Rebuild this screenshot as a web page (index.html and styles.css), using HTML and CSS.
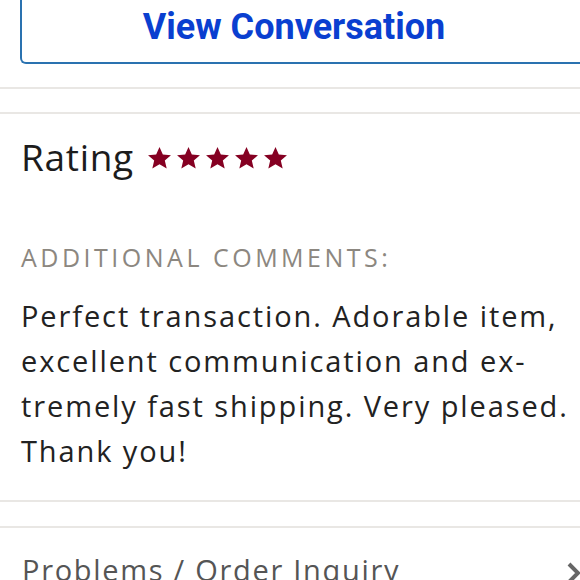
FILE: index.html
```html
<!DOCTYPE html>
<html>
<head>
<meta charset="utf-8">
<link rel="stylesheet" href="styles.css">
</head>
<body>
<div class="page">
  <div class="btn-row">
    <div class="btn">View Conversation</div>
  </div>
  <div class="sep sep-a"></div>
  <div class="sep sep-b"></div>
  <section class="review">
    <div class="rating">
      <span class="rating-label">Rating</span>
      <span class="stars">
        <svg class="star" viewBox="0 0 24 24"><path d="M12 1l3.2 7.1 7.8.7-5.9 5.2 1.8 7.7L12 17.6l-6.9 4.1 1.8-7.7L1 8.8l7.8-.7z"/></svg>
        <svg class="star" viewBox="0 0 24 24"><path d="M12 1l3.2 7.1 7.8.7-5.9 5.2 1.8 7.7L12 17.6l-6.9 4.1 1.8-7.7L1 8.8l7.8-.7z"/></svg>
        <svg class="star" viewBox="0 0 24 24"><path d="M12 1l3.2 7.1 7.8.7-5.9 5.2 1.8 7.7L12 17.6l-6.9 4.1 1.8-7.7L1 8.8l7.8-.7z"/></svg>
        <svg class="star" viewBox="0 0 24 24"><path d="M12 1l3.2 7.1 7.8.7-5.9 5.2 1.8 7.7L12 17.6l-6.9 4.1 1.8-7.7L1 8.8l7.8-.7z"/></svg>
        <svg class="star" viewBox="0 0 24 24"><path d="M12 1l3.2 7.1 7.8.7-5.9 5.2 1.8 7.7L12 17.6l-6.9 4.1 1.8-7.7L1 8.8l7.8-.7z"/></svg>
      </span>
    </div>
    <div class="comments-label">ADDITIONAL COMMENTS:</div>
    <p class="comment">Perfect transaction. Adorable item,<br>excellent communication and ex-<br>tremely fast shipping. Very pleased.<br>Thank you!</p>
  </section>
  <div class="sep sep-c"></div>
  <div class="sep sep-d"></div>
  <div class="link-row">
    <span class="link-label">Problems / Order Inquiry</span>
    <svg class="chevron" viewBox="0 0 16 24"><path d="M3 3l9 9-9 9" fill="none" stroke="#666" stroke-width="4"/></svg>
  </div>
</div>
</body>
</html>
```

FILE: styles.css
```css
html, body {
  margin: 0;
  padding: 0;
  background: #fff;
  overflow: hidden;
}
.page {
  width: 580px;
  height: 580px;
  overflow: hidden;
  font-family: "Open Sans", Lato, sans-serif;
}
.btn-row {
  padding-left: 20px;
}
.btn {
  box-sizing: border-box;
  height: 64px;
  border: 2px solid #2a72b0;
  border-top: none;
  border-right: none;
  border-radius: 0 0 0 6px;
  padding-right: 14px;
  text-align: center;
  font-family: Roboto, sans-serif;
  font-weight: 700;
  font-size: 36px;
  line-height: 54px;
  color: #0a3fd0;
}
.sep {
  height: 2px;
  background: #e9e7e4;
}
.sep-a { margin-top: 23px; }
.sep-b { margin-top: 23px; }
.review {
  padding: 18px 0 0 21px;
}
.rating {
  display: flex;
  align-items: center;
  gap: 13px;
}
.rating-label {
  font-size: 37px;
  letter-spacing: 0.7px;
  color: #1c1c1c;
  line-height: 50px;
}
.stars {
  display: flex;
  gap: 4px;
  padding-top: 3px;
}
.star {
  width: 25px;
  height: 25px;
  fill: #850022;
}
.comments-label {
  margin-top: 58px;
  font-size: 25px;
  letter-spacing: 3.5px;
  color: #8c8780;
  line-height: 34px;
}
.comment {
  margin: 19px 0 0 0;
  font-size: 29px;
  letter-spacing: 1.9px;
  line-height: 45px;
  color: #222;
  white-space: nowrap;
}
.sep-c { margin-top: 27px; }
.sep-d { margin-top: 24px; }
.link-row {
  display: flex;
  justify-content: space-between;
  align-items: center;
  padding: 22px 0 0 22px;
}
.link-label {
  font-size: 29px;
  letter-spacing: 1.7px;
  color: #555;
  line-height: 40px;
}
.chevron {
  width: 16px;
  height: 24px;
  margin-right: -2px;
  margin-top: 6px;
}
```
